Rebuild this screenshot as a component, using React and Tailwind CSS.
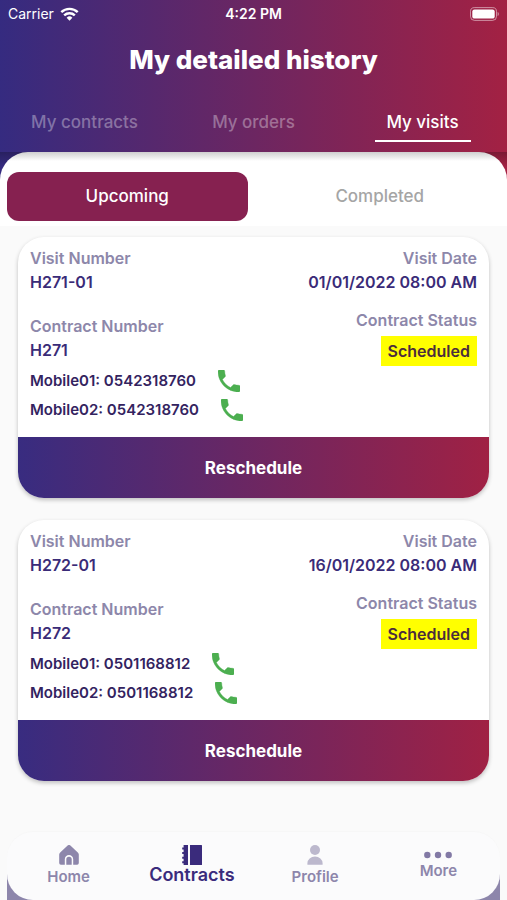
const visits = [
  { id: "H271-01", contract: "H271", date: "01/01/2022 08:00 AM", status: "Scheduled", mobile: "0542318760" },
  { id: "H272-01", contract: "H272", date: "16/01/2022 08:00 AM", status: "Scheduled", mobile: "0501168812" },
];

function StatusBar() {
  return (
    <div className="grid h-7 grid-cols-3 items-center px-2 text-sm">
      <div className="flex items-center gap-1.5">
        <span>Carrier</span>
        <svg viewBox="0 0 20 15" className="h-[14px] w-[19px]" fill="none" stroke="currentColor" strokeWidth="2.6" aria-hidden="true">
          <path d="M1.2 5.6a12.6 12.6 0 0 1 17.6 0" />
          <path d="M4.3 9a8.2 8.2 0 0 1 11.4 0" />
          <path d="M10 14.6 6.9 11.5a4.4 4.4 0 0 1 6.2 0z" fill="currentColor" stroke="none" />
        </svg>
      </div>
      <span className="text-center font-semibold">4:22 PM</span>
      <svg viewBox="0 0 30 14" className="h-[14px] w-[30px] justify-self-end" aria-hidden="true">
        <rect x="1.5" y="0.6" width="26" height="12.8" rx="4" fill="none" stroke="#fff" strokeOpacity="0.5" />
        <rect x="3.3" y="2.4" width="22.4" height="9.2" rx="2.2" fill="#fff" />
        <path d="M28.6 5v4c1.6-.6 1.6-3.4 0-4z" fill="#fff" fillOpacity="0.5" />
      </svg>
    </div>
  );
}

function PhoneIcon() {
  return (
    <svg viewBox="3 3 18 18" className="size-[22px]" fill="#4caf50" stroke="#4caf50" strokeWidth="0.3" aria-hidden="true">
      <path d="M6.62 10.79c1.44 2.83 3.76 5.14 6.59 6.59l2.2-2.2c.27-.27.67-.36 1.02-.24 1.12.37 2.33.57 3.57.57.55 0 1 .45 1 1V20c0 .55-.45 1-1 1-9.39 0-17-7.61-17-17 0-.55.45-1 1-1h3.5c.55 0 1 .45 1 1 0 1.25.2 2.45.57 3.57.11.35.03.74-.25 1.02l-2.2 2.2z" />
    </svg>
  );
}

function MobileRow({ label, number }) {
  return (
    <div className="flex h-[29px] items-center gap-[22px] text-[15px] text-[#33235f]">
      <span>{label}: {number}</span>
      <a href={`tel:${number}`} aria-label={`Call ${number}`}><PhoneIcon /></a>
    </div>
  );
}

function VisitCard({ visit }) {
  return (
    <article className="overflow-hidden rounded-[26px] bg-white text-base leading-6 font-semibold text-[#3a2b78] shadow-[0_2px_4px_rgba(0,0,0,0.24)]">
      <div className="flex h-[200px] justify-between px-3 pt-[9px]">
        <div>
          <p className="text-[#8d87aa]">Visit Number</p>
          <p>{visit.id}</p>
          <p className="mt-5 text-[#8d87aa]">Contract Number</p>
          <p>{visit.contract}</p>
          <div className="mt-1">
            <MobileRow label="Mobile01" number={visit.mobile} />
            <MobileRow label="Mobile02" number={visit.mobile} />
          </div>
        </div>
        <div className="flex flex-col items-end">
          <p className="text-[#8d87aa]">Visit Date</p>
          <p>{visit.date}</p>
          <p className="mt-3.5 text-[#8d87aa]">Contract Status</p>
          <p className="mt-1 bg-[#ffff00] px-[7px] py-[3px] text-[#4c2d3c]">{visit.status}</p>
        </div>
      </div>
      <button type="button" className="h-[61px] w-full bg-linear-to-r/srgb from-[#382c80] to-[#a02144] text-[17px] font-bold text-white">
        Reschedule
      </button>
    </article>
  );
}

function HomeIcon() {
  return (
    <svg viewBox="0 0 20 20" className="size-5" fill="#8d86ab" aria-hidden="true">
      <path d="M8.6.6a2 2 0 0 1 2.8 0l7.4 6.8c.6.6 1 1.300 1 2.100V18a1.700 1.700 0 0 1-1.700 1.700h-3.900V14.200a4.200 4.200 0 0 0-8.400 0v5.500H1.900A1.700 1.700 0 0 1 .2 18V9.500c0-.8.4-1.500 1-2.100z" />
      <path d="M7.300 19.700v-5.300a2.700 2.700 0 0 1 5.400 0v5.300z" />
    </svg>
  );
}

function ContractsIcon() {
  return (
    <svg viewBox="0 0 20 20" className="size-5" fill="#3a2b7c" aria-hidden="true">
      <path d="M1.600 0H6v20H1.600v-1.800H.2v-2h1.400v-2.400H.2v-2h1.400V9H.2V7h1.400V4.600H.2v-2h1.400z" />
      <path d="M8 0H19.500Q20 0 20 .5v19Q20 20 19.500 20H8z" />
    </svg>
  );
}

function ProfileIcon() {
  return (
    <svg viewBox="0 0 20 20" className="size-5" fill="#bcb8cd" aria-hidden="true">
      <circle cx="10" cy="5" r="5" />
      <path d="M2.400 19.800v-1.600a7.600 6.800 0 0 1 15.200 0v1.600z" />
    </svg>
  );
}

function MoreIcon() {
  return (
    <svg viewBox="0 0 28 8" className="h-2 w-7" fill="#8279a5" aria-hidden="true">
      <circle cx="3.300" cy="4" r="3.200" />
      <circle cx="14" cy="4" r="3.200" />
      <circle cx="24.700" cy="4" r="3.200" />
    </svg>
  );
}

function BottomNav() {
  const link = "flex flex-col items-center text-[15px] leading-5 font-semibold text-[#8d86ab]";
  return (
    <nav className="mx-[7px] mt-[50px] rounded-t-[26px] bg-linear-to-b from-[#fafafa] from-50% to-[#8d86ab] to-50%">
      <div className="grid h-[69px] grid-cols-4 rounded-[26px] bg-[#fbfbfc] pt-3.5 shadow-[inset_0_1px_0_#f7f7f7]">
        <a href="#home" className={link}><HomeIcon /><span className="mt-0.5">Home</span></a>
        <a href="#contracts" aria-current="page" className="flex flex-col items-center text-lg leading-5 font-semibold text-[#3a2b7c]">
          <ContractsIcon /><span>Contracts</span>
        </a>
        <a href="#profile" className={link}><ProfileIcon /><span className="mt-0.5">Profile</span></a>
        <a href="#more" className={`${link} pt-1.5`}><MoreIcon /><span className="mt-0.5">More</span></a>
      </div>
    </nav>
  );
}

export default function App() {
  return (
    <div className="flex min-h-screen flex-col bg-[#fafafa] font-['Inter','Liberation_Sans',sans-serif]">
      <div className="bg-linear-to-r/srgb from-[#352b80] to-[#a32143]">
        <header className="h-[152px] text-white">
          <StatusBar />
          <h1 className="mt-3.5 text-center text-[26px] leading-9 font-extrabold">My detailed history</h1>
          <nav className="mt-[26px] grid grid-cols-3 text-center text-[17px] leading-9 font-medium">
            <a href="#my-contracts" className="text-white/35">My contracts</a>
            <a href="#my-orders" className="text-white/35">My orders</a>
            <a href="#my-visits" aria-current="page" className="mx-auto w-24 border-b-2 border-white">My visits</a>
          </nav>
        </header>
        <div className="bg-linear-to-b from-black/25 to-transparent to-20%">
          <div className="grid grid-cols-2 gap-3 rounded-t-[28px] bg-linear-to-b from-[#cfcfcf] to-white to-[9px] px-[7px] pt-5 pb-[5px] text-[17px] font-medium">
            <button type="button" className="h-[49px] rounded-xl bg-[#862150] text-white">Upcoming</button>
            <button type="button" className="h-[49px] rounded-xl text-[#a5a5a5]">Completed</button>
          </div>
        </div>
      </div>
      <main className="flex flex-1 flex-col gap-[22px] px-[18px] pt-[11px]">
        {visits.map((v) => <VisitCard key={v.id} visit={v} />)}
      </main>
      <BottomNav />
    </div>
  );
}
